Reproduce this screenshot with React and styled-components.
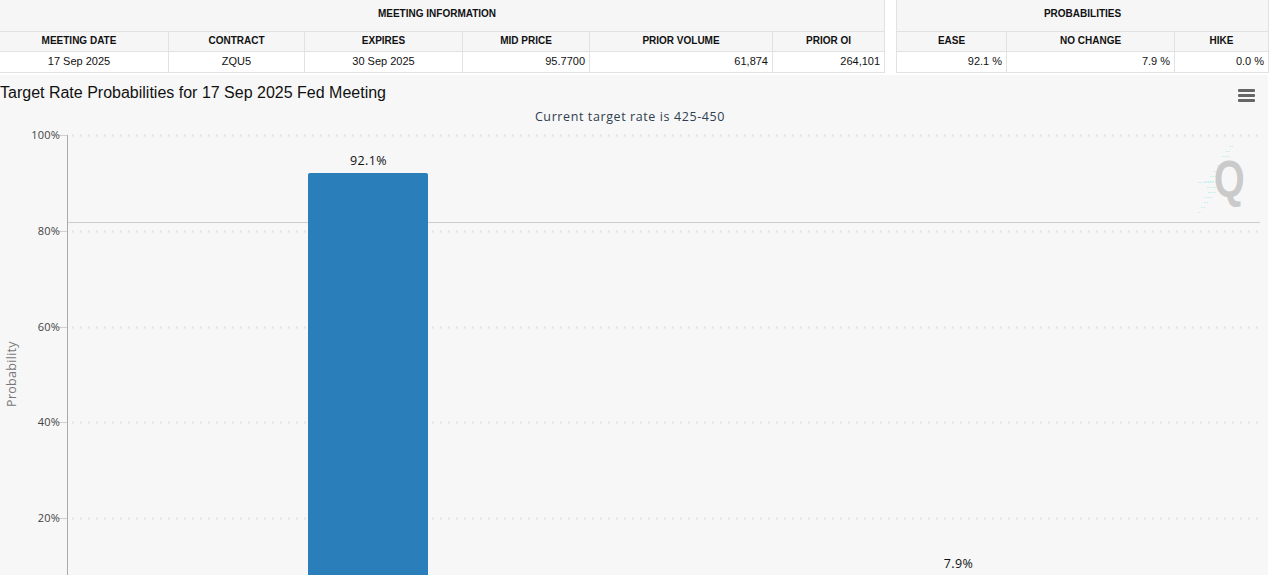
import React from "react";
import styled, { createGlobalStyle } from "styled-components";

const GlobalStyle = createGlobalStyle`
  html, body {
    margin: 0;
    padding: 0;
    height: 100%;
    overflow: hidden;
    background: #fff;
  }
  body {
    font-family: "Liberation Sans", Arial, sans-serif;
  }
`;

const meetingCols = [169, 136, 158, 127, 183, 112];
const probCols = [110, 168, 94];
const ticks = [
  { label: "100%", y: 135 },
  { label: "80%", y: 231 },
  { label: "60%", y: 327 },
  { label: "40%", y: 422 },
  { label: "20%", y: 518 },
];
// faint streaks left of the Q: [x1, y, x2]
const streaks = [
  [1229, 146, 1233],
  [1226, 151, 1231],
  [1222, 156, 1230],
  [1217, 165, 1221],
  [1214, 171, 1220],
  [1210, 176, 1218],
  [1205, 181, 1216],
  [1198, 182, 1214],
  [1207, 187, 1216],
  [1208, 192, 1216],
  [1205, 197, 1213],
  [1204, 202, 1209],
  [1201, 207, 1205],
  [1198, 212, 1201],
];

const App = () => {
  return (
    <Page>
      <GlobalStyle />
      <Tables>
        <MeetingTable $width={885}>
          <colgroup>
            {meetingCols.map((w, i) => (
              <col key={i} width={w} />
            ))}
          </colgroup>
          <thead>
            <tr>
              <GroupHead colSpan={6}>MEETING INFORMATION</GroupHead>
            </tr>
            <tr>
              <Head>MEETING DATE</Head>
              <Head>CONTRACT</Head>
              <Head>EXPIRES</Head>
              <Head>MID PRICE</Head>
              <Head>PRIOR VOLUME</Head>
              <Head>PRIOR OI</Head>
            </tr>
          </thead>
          <tbody>
            <tr>
              <Cell $center>17 Sep 2025</Cell>
              <Cell $center>ZQU5</Cell>
              <Cell $center>30 Sep 2025</Cell>
              <Cell>95.7700</Cell>
              <Cell>61,874</Cell>
              <Cell>264,101</Cell>
            </tr>
          </tbody>
        </MeetingTable>
        <Table $width={372}>
          <colgroup>
            {probCols.map((w, i) => (
              <col key={i} width={w} />
            ))}
          </colgroup>
          <thead>
            <tr>
              <GroupHead colSpan={3}>PROBABILITIES</GroupHead>
            </tr>
            <tr>
              <Head>EASE</Head>
              <Head>NO CHANGE</Head>
              <Head>HIKE</Head>
            </tr>
          </thead>
          <tbody>
            <tr>
              <Cell>92.1 %</Cell>
              <Cell>7.9 %</Cell>
              <Cell>0.0 %</Cell>
            </tr>
          </tbody>
        </Table>
      </Tables>
      <ChartPanel>
        <svg width="1268" height="500" viewBox="0 75 1268 500">
          <Title x="0" y="98">
            Target Rate Probabilities for 17 Sep 2025 Fed Meeting
          </Title>
          <Subtitle x="630" y="121" textAnchor="middle">
            Current target rate is 425-450
          </Subtitle>

          {/* menu button */}
          <g fill="#666">
            <rect x="1238" y="89" width="17" height="3" rx="1" />
            <rect x="1238" y="94" width="17" height="3" rx="1" />
            <rect x="1238" y="99" width="17" height="3" rx="1" />
          </g>

          {/* watermark */}
          <g stroke="#b5ecef" strokeWidth="1" strokeDasharray="1.5 1" opacity="0.8">
            {streaks.map(([x1, y, x2]) => (
              <line key={y} x1={x1} y1={y + 0.5} x2={x2} y2={y + 0.5} />
            ))}
          </g>
          <Watermark transform="translate(1214 197) scale(0.76 1)">Q</Watermark>

          {ticks.map((t) => (
            <g key={t.label}>
              <line x1="72" y1={t.y + 0.5} x2="1260" y2={t.y + 0.5} stroke="#e4e4e4" strokeWidth="2" strokeDasharray="2 6" />
              <line x1="58" y1={t.y + 0.5} x2="68" y2={t.y + 0.5} stroke="#d0d0d0" />
              <AxisLabel x="60" y={t.y + 4} textAnchor="end">
                {t.label}
              </AxisLabel>
            </g>
          ))}
          <line x1="67.5" y1="135" x2="67.5" y2="575" stroke="#aaa" />
          <line x1="68" y1="222.5" x2="1260" y2="222.5" stroke="#ccc" />

          <AxisTitle transform="translate(16 374) rotate(-90)" textAnchor="middle">
            Probability
          </AxisTitle>

          <path d="M308 575V175a2 2 0 0 1 2-2h116a2 2 0 0 1 2 2v400z" fill="#2a7fba" />
          <DataLabel x="368.5" y="165" textAnchor="middle">
            92.1%
          </DataLabel>
          <DataLabel x="958.5" y="568" textAnchor="middle">
            7.9%
          </DataLabel>
        </svg>
      </ChartPanel>
    </Page>
  );
};

const Page = styled.div`
  width: 1275px;
  height: 575px;
  overflow: hidden;
  display: flex;
  flex-direction: column;
  gap: 2px;
`;
const Tables = styled.div`
  display: flex;
  gap: 11px;
  width: 1268px;
`;
const Table = styled.table`
  width: ${(p) => p.$width}px;
  table-layout: fixed;
  border-collapse: collapse;
  font-size: 11px;
  color: #111;
`;
const GroupHead = styled.th`
  height: 31px;
  padding: 0 0 4px;
  box-sizing: border-box;
  font-size: 10px;
  font-weight: 700;
  text-align: center;
  background: #f6f6f7;
  border: 1px solid #e2e2e2;
  border-top: 0;
`;
const Head = styled.th`
  height: 20px;
  padding: 0 0 1px;
  box-sizing: border-box;
  font-size: 10px;
  font-weight: 700;
  text-align: center;
  background: #f6f6f7;
  border: 1px solid #e2e2e2;
`;
const Cell = styled.td`
  height: 21px;
  padding: 0 4px 2px;
  box-sizing: border-box;
  font-size: 11px;
  text-align: ${(p) => (p.$center ? "center" : "right")};
  background: #fff;
  border: 1px solid #e2e2e2;
`;
// the first column runs off the left edge, so its text sits left of centre
const MeetingTable = styled(Table)`
  margin-left: -1px;
  th:first-child {
    padding-right: 10px;
  }
  td:first-child {
    padding-right: 14px;
  }
`;
const ChartPanel = styled.div`
  width: 1268px;
  height: 500px;
  background: #f7f7f7;
  svg {
    display: block;
  }
`;
const Title = styled.text`
  font-family: "Liberation Sans", Arial, sans-serif;
  font-size: 16px;
  fill: #111;
`;
const Subtitle = styled.text`
  font-family: "Open Sans", sans-serif;
  font-size: 12.5px;
  letter-spacing: 0.6px;
  fill: #2f3e50;
`;
const AxisLabel = styled.text`
  font-family: "Open Sans", sans-serif;
  font-size: 11px;
  letter-spacing: 0.2px;
  fill: #444;
`;
const AxisTitle = styled.text`
  font-family: "Open Sans", sans-serif;
  font-size: 12.5px;
  letter-spacing: 0.3px;
  fill: #777;
`;
const DataLabel = styled.text`
  font-family: "Open Sans", sans-serif;
  font-size: 12.5px;
  letter-spacing: 0.4px;
  fill: #111;
`;
const Watermark = styled.text`
  font-family: "Liberation Sans", Arial, sans-serif;
  font-size: 52px;
  font-weight: 700;
  fill: #cacaca;
`;

export default App;
